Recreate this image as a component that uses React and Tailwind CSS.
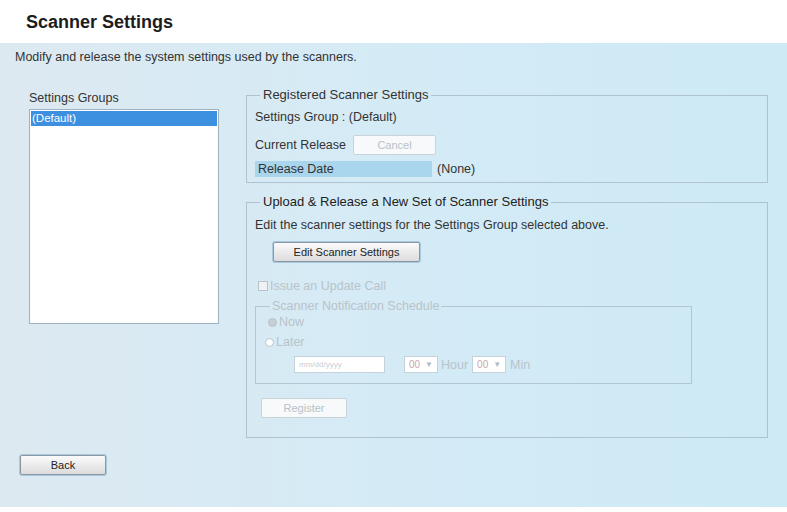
import React from 'react'

const font = { fontFamily: '"Liberation Sans", Arial, sans-serif' }

const Btn = ({ children, className = '', disabled }) => (
  <button
    className={`h-[20px] border rounded-[2px] text-[11px] leading-none ${
      disabled
        ? 'border-[#c9d3da] bg-[#f7f9fa] text-[#b9c1c6]'
        : 'border-[#8a97a3] bg-gradient-to-b from-[#fbfbfb] to-[#dcdcdc] text-[#222] shadow-[0_0_0_1px_#a9cbe0]'
    } ${className}`}
  >
    {children}
  </button>
)

const Select = ({ className = '' }) => (
  <div className={`flex items-center h-[17px] w-[34px] border border-[#c6d2da] bg-white text-[10px] text-[#c9a9a9] px-[4px] ${className}`}>
    <span>00</span>
    <span className="ml-auto text-[#aebbc4] text-[8px]">▼</span>
  </div>
)

export default function App() {
  return (
    <div className="w-[787px] h-[512px] bg-white text-[#333] text-[12.5px] leading-[16px] overflow-hidden" style={font}>
      <div className="h-[43px] pl-[26px] pt-[11px]">
        <h1 className="text-[18px] leading-[22px] font-bold text-[#1c1c1c]">Scanner Settings</h1>
      </div>
      <div className="h-[464px] bg-gradient-to-r from-[#dde9f1] via-[#d4ebf6] to-[#cdeaf5] pl-[15px] pt-[6px]">
        <p>Modify and release the system settings used by the scanners.</p>
        <div className="flex mt-[25px]">
          <div className="ml-[14px] w-[190px]">
            <div>Settings Groups</div>
            <div className="h-[215px] mt-[3px] border border-[#9fb1bf] bg-white p-[1px]">
              <div className="bg-[#3d8fe0] text-white text-[11.5px] h-[15px] leading-[15px] px-[1px]">(Default)</div>
            </div>
          </div>

          <div className="ml-[27px] w-[522px] flex flex-col">
            <fieldset className="border border-[#aec3cf] px-[8px] pb-[5px] -mt-[3px]">
              <legend className="ml-[5px] px-[3px] text-[13px] leading-[16px]">Registered Scanner Settings</legend>
              <div className="mt-[6px]">Settings Group : (Default)</div>
              <div className="flex items-center mt-[10px]">
                <span>Current Release</span>
                <Btn disabled className="ml-[7px] w-[83px]">Cancel</Btn>
              </div>
              <div className="flex items-center mt-[6px]">
                <div className="w-[177px] h-[16px] bg-[#a9d5ed] pl-[3px]">Release Date</div>
                <span className="ml-[5px]">(None)</span>
              </div>
            </fieldset>

            <fieldset className="border border-[#aec3cf] px-[8px] pb-[19px] mt-[11px]">
              <legend className="ml-[5px] px-[3px] text-[13px] leading-[16px] text-[#222]">Upload &amp; Release a New Set of Scanner Settings</legend>
              <div className="mt-[7px]">Edit the scanner settings for the Settings Group selected above.</div>
              <Btn className="ml-[18px] mt-[9px] w-[147px]">Edit Scanner Settings</Btn>
              <div className="flex items-center mt-[16px] text-[#b9c3c9] ml-[3px]">
                <span className="w-[10px] h-[10px] border border-[#b9c3c9] bg-[#eef2f4] mr-[2px]" />
                <span>Issue an Update Call</span>
              </div>
              <fieldset className="border border-[#b3c7d2] w-[437px] mt-[4px] px-[12px] pb-[10px] text-[#b9c3c9]">
                <legend className="px-[2px] ml-[2px]">Scanner Notification Schedule</legend>
                <div className="flex items-center">
                  <span className="w-[9px] h-[9px] rounded-full border border-[#b9c3c9] bg-[#c5cfd4] mr-[2px]" />
                  <span>Now</span>
                </div>
                <div className="flex items-center mt-[4px] -ml-[3px]">
                  <span className="w-[9px] h-[9px] rounded-full border border-[#b9c3c9] bg-white mr-[2px]" />
                  <span>Later</span>
                </div>
                <div className="flex items-center mt-[6px] ml-[26px]">
                  <div className="w-[91px] h-[17px] border border-[#c6d2da] bg-white text-[8px] text-[#c6ced3] pl-[4px] leading-[15px]">mm/dd/yyyy</div>
                  <Select className="ml-[19px]" />
                  <span className="ml-[3px]">Hour</span>
                  <Select className="ml-[4px]" />
                  <span className="ml-[4px]">Min</span>
                </div>
              </fieldset>
              <Btn disabled className="mt-[14px] ml-[6px] w-[86px]">Register</Btn>
            </fieldset>
          </div>
        </div>
        <Btn className="mt-[17px] ml-[5px] w-[86px]">Back</Btn>
      </div>
    </div>
  )
}
